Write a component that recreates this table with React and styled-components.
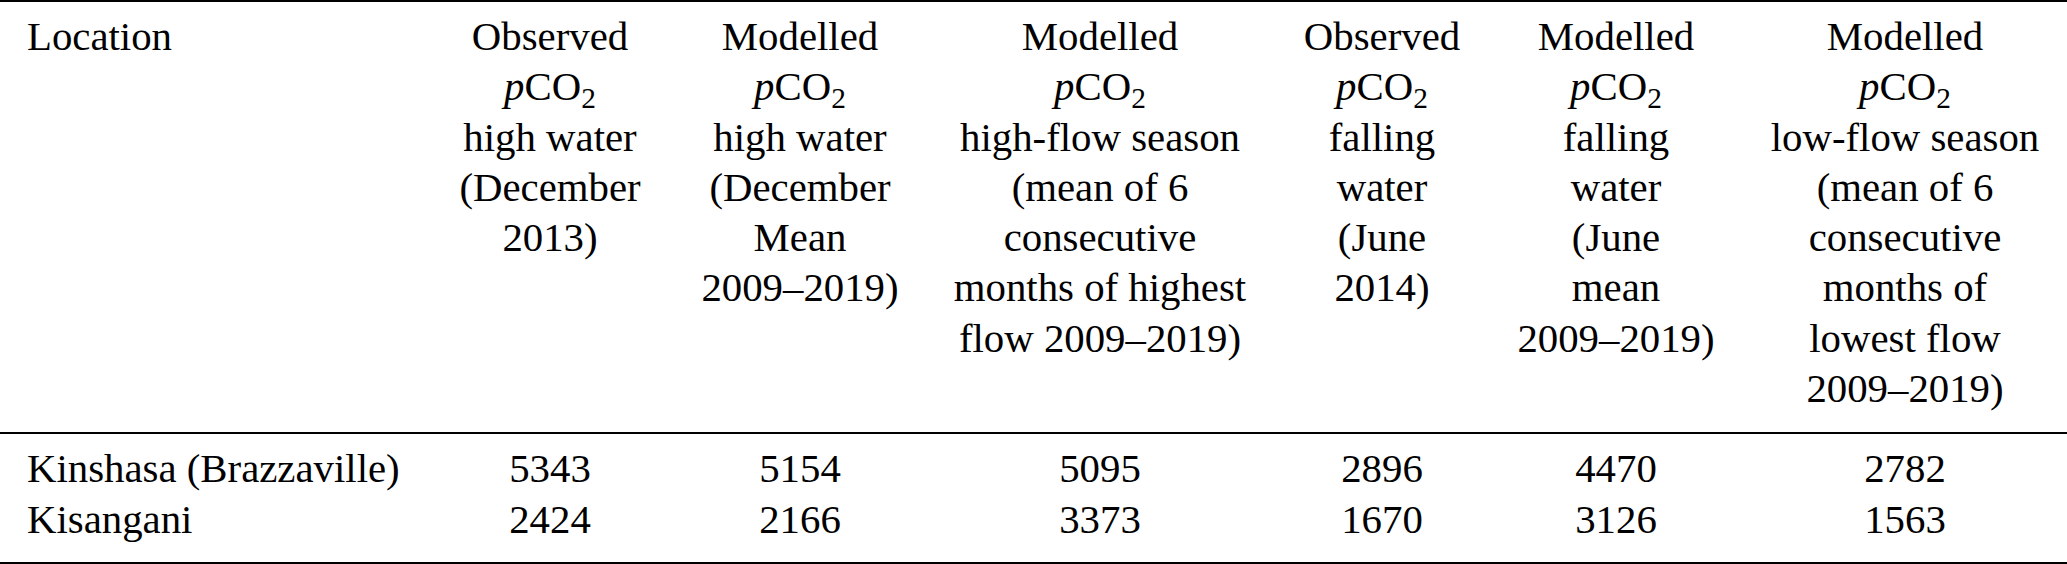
import React from 'react'
import styled, { createGlobalStyle } from 'styled-components'

const GlobalStyle = createGlobalStyle`
    html, body {
        margin: 0;
        padding: 0;
        background: #fff;
    }
    body {
        font-family: "Liberation Serif", serif;
        color: #000;
    }
`

const Table = styled.table`
    width: 2067px;
    table-layout: fixed;
    border-collapse: collapse;
    border-spacing: 0;
    font-family: "Liberation Serif", "Times New Roman", serif;
    font-size: 40.8px;
    line-height: 50.3px;
    color: #000;
`

const HeadCell = styled.th`
    font-family: "Liberation Serif", serif;
    font-weight: normal;
    vertical-align: top;
    text-align: ${props => props.$align || 'center'};
    padding: 10px 0 18px ${props => props.$align === 'left' ? '27px' : '0'};
    border-top: 2px solid #000;
    border-bottom: 2px solid #000;
`

const Line = styled.div`
    white-space: nowrap;
`

const BodyCell = styled.td`
    font-family: "Liberation Serif", serif;
    white-space: nowrap;
    text-align: ${props => props.$align || 'center'};
    padding: ${props => props.$first ? '10px' : '0'} 0 ${props => props.$last ? '17px' : '0'} ${props => props.$align === 'left' ? '27px' : '0'};
    border-bottom: ${props => props.$last ? '2px solid #000' : 'none'};
`

const Var = styled.span`
    font-style: italic;
`

const Sub = styled.span`
    font-size: 0.72em;
    line-height: 0;
    vertical-align: -8px;
`

function PCO2() {
    return <><Var>p</Var>CO<Sub>2</Sub></>
}

const columns = [
    { width: 425, align: 'left' },
    { width: 250 },
    { width: 250 },
    { width: 350 },
    { width: 214 },
    { width: 254 },
    { width: 324 },
]

const headers = [
    ['Location'],
    ['Observed', 'pco2', 'high water', '(December', '2013)'],
    ['Modelled', 'pco2', 'high water', '(December', 'Mean', '2009–2019)'],
    ['Modelled', 'pco2', 'high-flow season', '(mean of 6', 'consecutive', 'months of highest', 'flow 2009–2019)'],
    ['Observed', 'pco2', 'falling', 'water', '(June', '2014)'],
    ['Modelled', 'pco2', 'falling', 'water', '(June', 'mean', '2009–2019)'],
    ['Modelled', 'pco2', 'low-flow season', '(mean of 6', 'consecutive', 'months of', 'lowest flow', '2009–2019)'],
]

const rows = [
    ['Kinshasa (Brazzaville)', '5343', '5154', '5095', '2896', '4470', '2782'],
    ['Kisangani', '2424', '2166', '3373', '1670', '3126', '1563'],
]

function App() {
    return (
        <>
            <GlobalStyle />
            <Table>
                <colgroup>
                    {columns.map((c, i) => <col key={i} style={{ width: c.width }} />)}
                </colgroup>
                <thead>
                    <tr>
                        {headers.map((lines, i) => (
                            <HeadCell key={i} $align={columns[i].align}>
                                {lines.map((line, j) => (
                                    <Line key={j}>{line === 'pco2' ? <PCO2 /> : line}</Line>
                                ))}
                            </HeadCell>
                        ))}
                    </tr>
                </thead>
                <tbody>
                    {rows.map((row, r) => (
                        <tr key={r}>
                            {row.map((value, i) => (
                                <BodyCell
                                    key={i}
                                    $align={columns[i].align}
                                    $first={r === 0}
                                    $last={r === rows.length - 1}
                                >
                                    {value}
                                </BodyCell>
                            ))}
                        </tr>
                    ))}
                </tbody>
            </Table>
        </>
    )
}

export default App
